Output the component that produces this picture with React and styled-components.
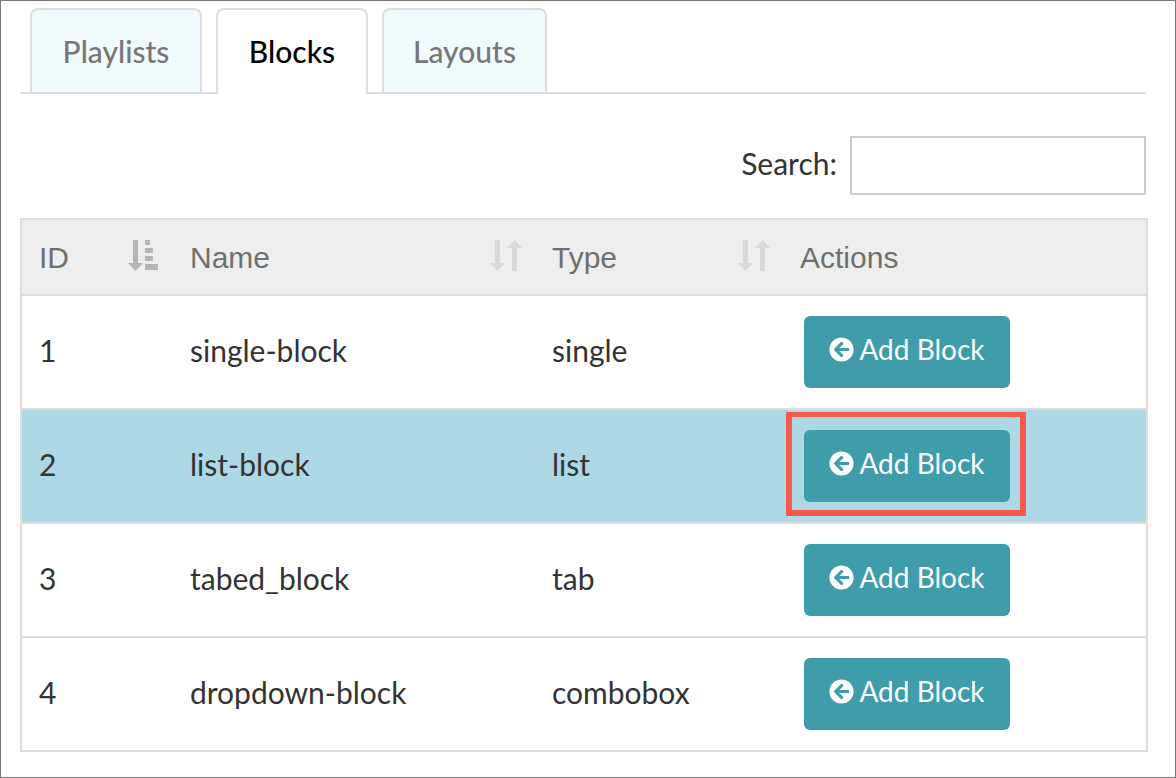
import styled, { createGlobalStyle } from "styled-components";
import { FaArrowCircleLeft } from "react-icons/fa";

const GlobalStyle = createGlobalStyle`
  * { box-sizing: border-box; }
  html, body { margin: 0; padding: 0; background: #fff; }
  body { font-family: Lato, "Open Sans", sans-serif; color: #333; }
`;

const Frame = styled.div`
  width: 1176px;
  height: 778px;
  border: 1px solid #777;
  padding: 7px 29px 0 19px;
  overflow: hidden;
`;

const TabBar = styled.div`
  display: flex;
  height: 86px;
  padding-left: 10px;
  gap: 14px;
  border-bottom: 2px solid #ddd;
`;

const Tab = styled.div`
  width: ${({ $width }) => $width}px;
  height: ${({ $active }) => ($active ? 86 : 84)}px;
  display: flex;
  align-items: flex-start;
  justify-content: center;
  padding-top: 23px;
  border: 2px solid #ddd;
  border-bottom: none;
  border-radius: 8px 8px 0 0;
  background: ${({ $active }) => ($active ? "#fff" : "#f0fbfe")};
  color: ${({ $active }) => ($active ? "#000" : "#777")};
  font-size: 30px;
  line-height: 36px;
  font-weight: 500;
`;

const SearchRow = styled.div`
  display: flex;
  justify-content: flex-end;
  align-items: center;
  gap: 13px;
  margin-top: 42px;
  height: 59px;
`;

const SearchLabel = styled.label`
  font-size: 30px;
  padding-bottom: 5px;
  color: #333;
`;

const SearchInput = styled.input`
  width: 296px;
  height: 59px;
  border: 2px solid #ccc;
  outline: none;
  background: #fff;
`;

const Table = styled.table`
  width: 1126px;
  margin-top: 23px;
  border-collapse: collapse;
  table-layout: fixed;
  border: 2px solid #ddd;
`;

const HeadCell = styled.th`
  position: relative;
  height: 76px;
  padding: 2px 18px 0;
  background: #eee;
  border-bottom: 2px solid #ddd;
  font-family: "Liberation Sans", Arial, sans-serif;
  font-size: 30px;
  font-weight: 400;
  color: #707070;
  text-align: left;
  &:first-child { padding-left: 17px; }
`;

const SortSlot = styled.span`
  position: absolute;
  top: 19px;
  right: 12px;
  display: block;
  line-height: 0;
`;

const Row = styled.tr`
  background: ${({ $selected }) => ($selected ? "#add8e6" : "#fff")};
`;

const Cell = styled.td`
  height: 114px;
  padding: 0 18px 5px;
  border-top: 2px solid #ddd;
  font-size: 30px;
  color: #333;
  &:first-child { padding-left: 17px; }
`;

const ButtonWrap = styled.div`
  position: relative;
  display: block;
  width: 206px;
  margin: 5px 0 0 4px;
`;

const AddButton = styled.button`
  display: flex;
  align-items: center;
  justify-content: center;
  gap: 5px;
  width: 206px;
  height: 72px;
  padding: 0 0 6px;
  border: none;
  border-radius: 6px;
  background: #3f9cab;
  color: #fff;
  font-family: Lato, sans-serif;
  font-size: 28px;
  svg { width: 25px; height: 25px; }
`;

const Highlight = styled.span`
  position: absolute;
  left: -18px;
  top: -18px;
  width: 240px;
  height: 104px;
  border: 6px solid #f9594c;
  border-top-width: 5px;
  pointer-events: none;
`;

function SortAmountIcon() {
  return (
    <svg width="32" height="32" viewBox="0 0 32 32" fill="#b5b5b5">
      <path d="M5 1h5v23h5L7.5 32 0 24h5z" />
      <rect x="17" y="1" width="5" height="5" />
      <rect x="17" y="9" width="8" height="5" />
      <rect x="17" y="17" width="8" height="5" />
      <rect x="17" y="25" width="13" height="6" />
    </svg>
  );
}

function SortBothIcon() {
  return (
    <svg width="32" height="32" viewBox="0 0 32 32" fill="#d8d8d8">
      <path d="M5 1h5v23h5L7.5 32 0 24h5z" />
      <path d="M22 32h5V9h5L24.5 1 17 9h5z" />
    </svg>
  );
}

const blocks = [
  { id: 1, name: "single-block", type: "single" },
  { id: 2, name: "list-block", type: "list", selected: true },
  { id: 3, name: "tabed_block", type: "tab" },
  { id: 4, name: "dropdown-block", type: "combobox" },
];

export default function App() {
  return (
    <Frame>
      <GlobalStyle />
      <TabBar>
        <Tab $width={172}>Playlists</Tab>
        <Tab $width={152} $active>Blocks</Tab>
        <Tab $width={165}>Layouts</Tab>
      </TabBar>
      <SearchRow>
        <SearchLabel>Search:</SearchLabel>
        <SearchInput />
      </SearchRow>
      <Table>
        <colgroup>
          <col width="151" />
          <col width="362" />
          <col width="248" />
          <col width="365" />
        </colgroup>
        <thead>
          <tr>
            <HeadCell>ID<SortSlot><SortAmountIcon /></SortSlot></HeadCell>
            <HeadCell>Name<SortSlot><SortBothIcon /></SortSlot></HeadCell>
            <HeadCell>Type<SortSlot><SortBothIcon /></SortSlot></HeadCell>
            <HeadCell>Actions</HeadCell>
          </tr>
        </thead>
        <tbody>
          {blocks.map((block) => (
            <Row key={block.id} $selected={block.selected}>
              <Cell>{block.id}</Cell>
              <Cell>{block.name}</Cell>
              <Cell>{block.type}</Cell>
              <Cell>
                <ButtonWrap>
                  <AddButton><FaArrowCircleLeft /> Add Block</AddButton>
                  {block.selected && <Highlight />}
                </ButtonWrap>
              </Cell>
            </Row>
          ))}
        </tbody>
      </Table>
    </Frame>
  );
}
